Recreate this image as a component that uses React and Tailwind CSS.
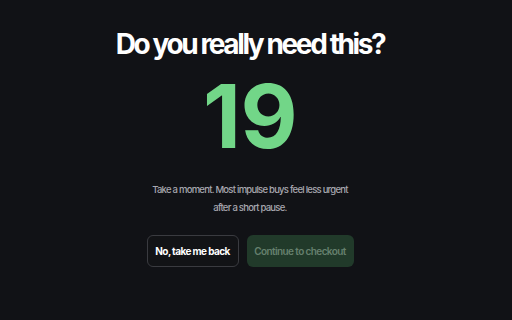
export default function App() {
  return (
    <div className="flex h-[320px] w-[512px] flex-col items-center bg-[#111216] pr-[12px] font-['Inter',sans-serif] text-white">
      <h1 className="mt-[26px] text-[28px] font-bold leading-[36px] tracking-[-2.4px]">
        Do you really need this?
      </h1>
      <div className="mt-[6px] text-[88px] font-bold leading-[96px] tracking-[-0.5px] text-[#72d688]">
        19
      </div>
      <p className="mt-[17px] text-center text-[9.5px] font-medium leading-[18px] tracking-[-0.75px] text-[#a8a8b0]">
        Take a moment. Most impulse buys feel less urgent
        <br />
        after a short pause.
      </p>
      <div className="mt-[18px] flex gap-[8px]">
        <button className="h-[32px] w-[92px] rounded-[6px] border border-[#3a3b40] bg-[#121316] text-[10px] font-bold tracking-[-0.6px] text-white">
          No, take me back
        </button>
        <button className="h-[32px] w-[107px] rounded-[6px] bg-[#213a2a] text-[10px] font-semibold tracking-[-0.6px] text-[#66806e]">
          Continue to checkout
        </button>
      </div>
    </div>
  );
}
